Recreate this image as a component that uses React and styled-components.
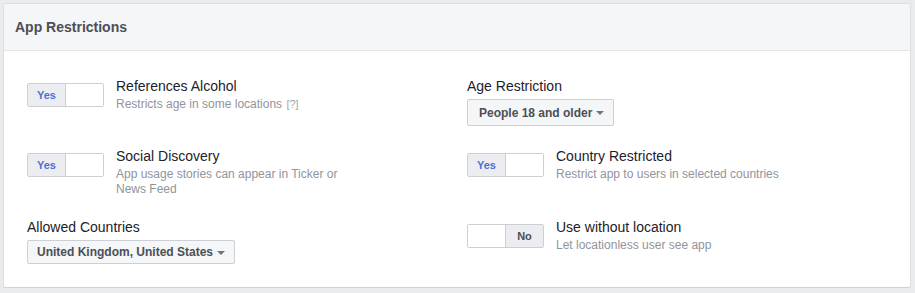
import styled, { createGlobalStyle } from "styled-components";

const GlobalStyle = createGlobalStyle`
  html, body {
    margin: 0;
    padding: 0;
    background: #e9ebee;
    font-family: "Liberation Sans", Arial, Helvetica, sans-serif;
  }
`;

const App = () => {
  return (
    <>
      <GlobalStyle />
      <Page>
        <Card>
          <CardHeader>
            <Title>App Restrictions</Title>
          </CardHeader>

          <CardBody>
            <Setting
              on
              label="References Alcohol"
              description={
                <>
                  Restricts age in some locations <Help>[?]</Help>
                </>
              }
            />

            <Field>
              <FieldLabel>Age Restriction</FieldLabel>
              <Dropdown $height={27} $padLeft={11}>
                People 18 and older
                <Caret />
              </Dropdown>
            </Field>

            <Setting
              on
              label="Social Discovery"
              description="App usage stories can appear in Ticker or News Feed"
            />

            <Setting
              on
              label="Country Restricted"
              description="Restrict app to users in selected countries"
            />

            <Field>
              <FieldLabel>Allowed Countries</FieldLabel>
              <Dropdown $height={24} $padLeft={9}>
                United Kingdom, United States
                <Caret />
              </Dropdown>
            </Field>

            <Setting
              on={false}
              label="Use without location"
              description="Let locationless user see app"
            />
          </CardBody>
        </Card>
      </Page>
    </>
  );
};

const Setting = ({ on, label, description }) => {
  return (
    <SettingRow>
      <Toggle>
        <Segment $active={on}>{on ? "Yes" : ""}</Segment>
        <Segment $active={!on} $off>
          {on ? "" : "No"}
        </Segment>
      </Toggle>
      <SettingText>
        <SettingLabel>{label}</SettingLabel>
        <SettingDescription>{description}</SettingDescription>
      </SettingText>
    </SettingRow>
  );
};

const Page = styled.div`
  padding: 3px 4px 5px 3px;
`;

const Card = styled.div`
  background: #fff;
  border: 1px solid #dddfe2;
  border-bottom-color: #d0d1d5;
  border-radius: 3px;
  overflow: hidden;
`;

const CardHeader = styled.div`
  height: 46px;
  display: flex;
  align-items: center;
  padding: 0 11px;
  background: #f5f6f7;
  border-bottom: 1px solid #e5e5e5;
`;

const Title = styled.h2`
  margin: 0;
  font-size: 14px;
  font-weight: bold;
  color: #4b4f56;
  line-height: 18px;
`;

const CardBody = styled.div`
  display: grid;
  grid-template-columns: 440px 1fr;
  row-gap: 21px;
  align-items: start;
  padding: 26px 23px 23px;
`;

const SettingRow = styled.div`
  display: flex;
  align-items: flex-start;
  gap: 12px;
`;

const Toggle = styled.div`
  display: flex;
  flex: none;
  width: 77px;
  height: 24px;
  margin-top: 6px;
  box-sizing: border-box;
  border: 1px solid #ccd0d5;
  border-radius: 2px;
  overflow: hidden;
`;

const Segment = styled.div`
  flex: 1;
  display: flex;
  align-items: center;
  justify-content: center;
  font-size: 11px;
  font-weight: bold;
  background: ${(p) => (p.$active ? "#ebedf0" : "#fff")};
  color: ${(p) => (p.$off ? "#4b4f56" : "#4e6fd6")};

  &:first-child {
    border-right: 1px solid #ccd0d5;
  }
`;

const SettingText = styled.div`
  width: 240px;
`;

const SettingLabel = styled.div`
  font-size: 14px;
  line-height: 18px;
  color: #1d2129;
`;

const SettingDescription = styled.div`
  margin-top: 2px;
  font-size: 12px;
  line-height: 15px;
  color: #90949c;
`;

const Help = styled.span`
  font-size: 11px;
  color: #a0a4ab;
  margin-left: 1px;
`;

const Field = styled.div`
  display: flex;
  flex-direction: column;
  align-items: flex-start;
  gap: 4px;
`;

const FieldLabel = styled.div`
  font-size: 14px;
  line-height: 18px;
  color: #1d2129;
`;

const Dropdown = styled.div`
  display: inline-flex;
  align-items: center;
  gap: 4px;
  height: ${(p) => p.$height}px;
  box-sizing: border-box;
  padding: 0 9px 0 ${(p) => p.$padLeft}px;
  background: #f5f6f7;
  border: 1px solid #ccd0d5;
  border-radius: 2px;
  font-size: 12px;
  font-weight: bold;
  color: #4b4f56;
  white-space: nowrap;
`;

const Caret = styled.span`
  width: 0;
  height: 0;
  border-left: 4px solid transparent;
  border-right: 4px solid transparent;
  border-top: 4px solid #6f747b;
  margin-top: 1px;
`;

export default App;
